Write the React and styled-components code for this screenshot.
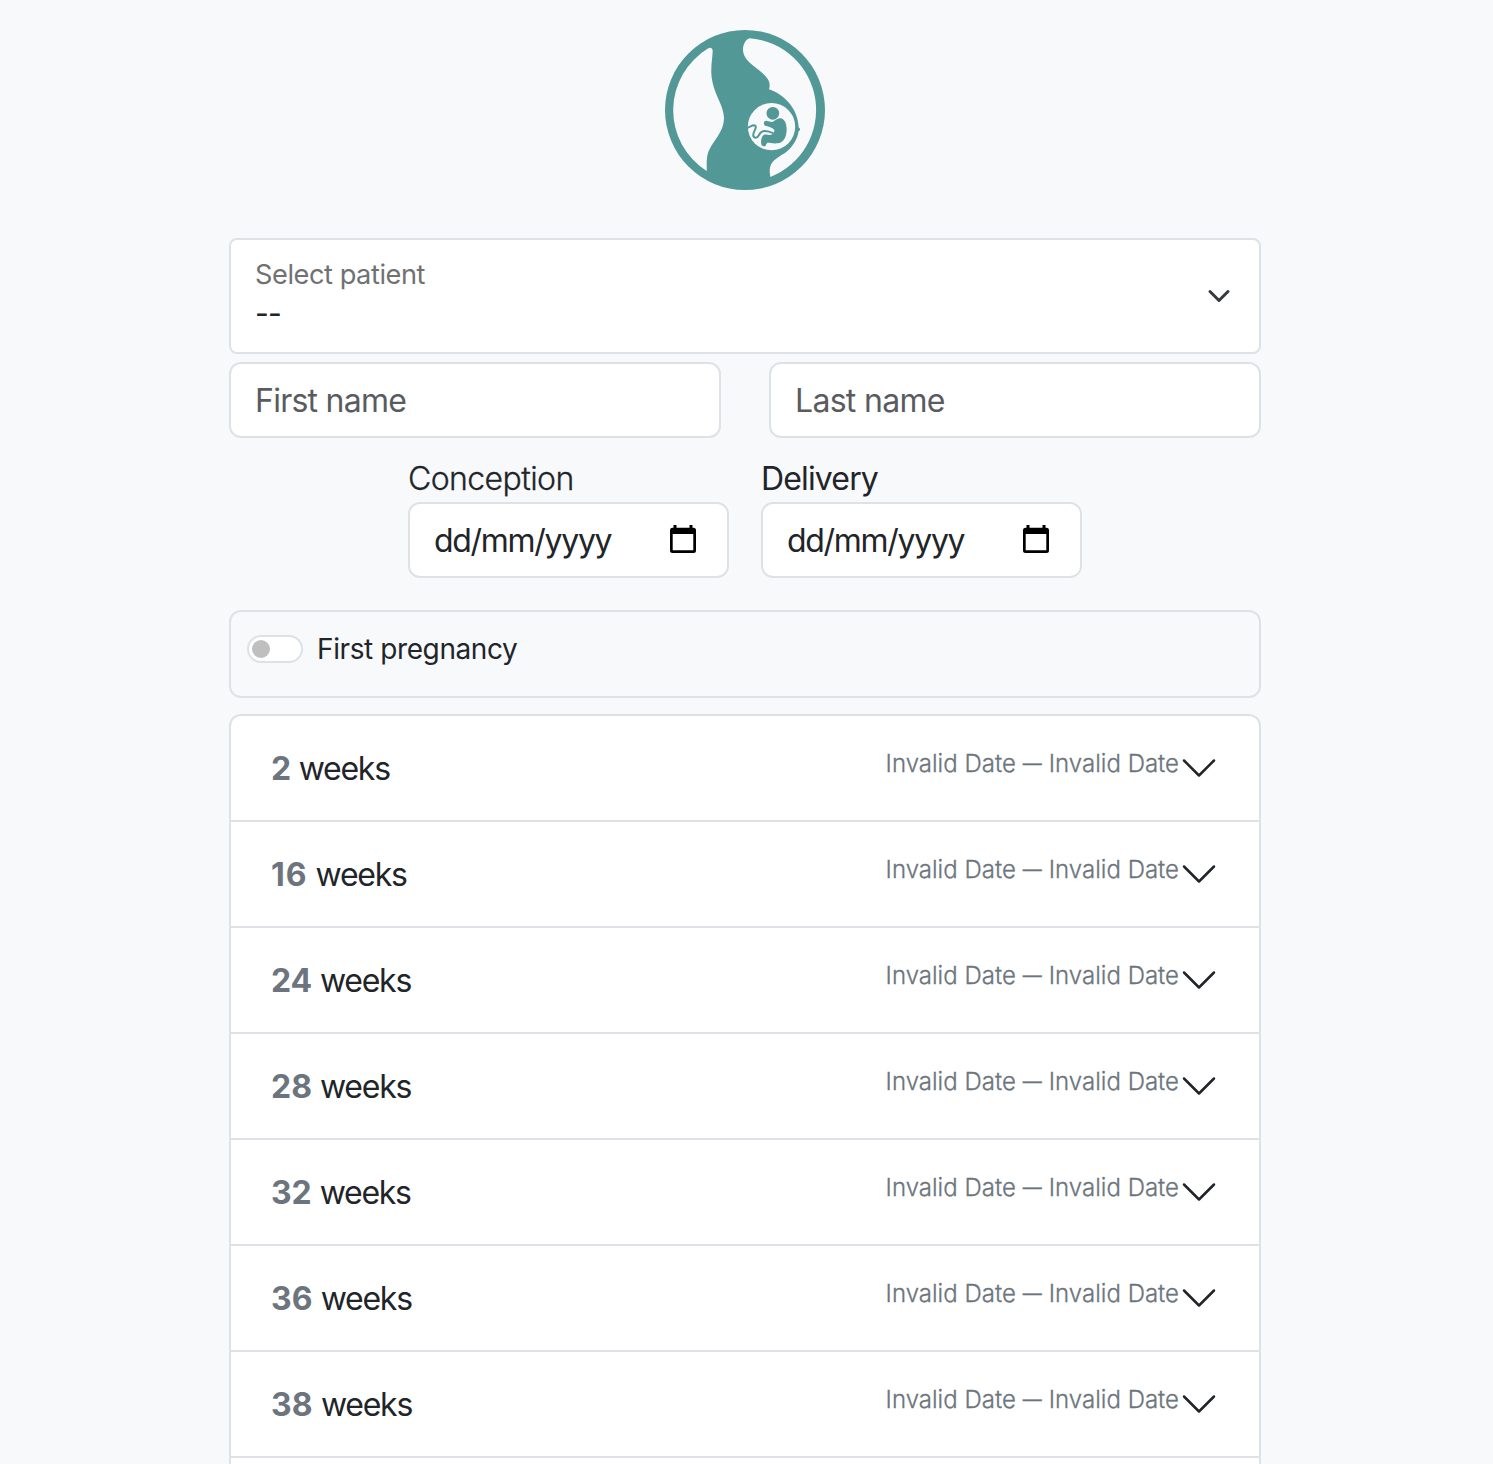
import React from "react";
import styled, { createGlobalStyle } from "styled-components";

const GlobalStyle = createGlobalStyle`
  *, *::before, *::after { box-sizing: border-box; }
  html, body { margin: 0; background: #f8f9fb; }
  body {
    color: #212529;
    font-family: Inter, "Liberation Sans", sans-serif;
    font-size: 32px;
    line-height: 48px;
    -webkit-font-smoothing: antialiased;
  }
`;

const Page = styled.main`
  width: 1032px;
  height: 1464px;
  margin-left: 229px;
  padding-top: 30px;
  display: flex;
  flex-direction: column;
`;

const Logo = styled.svg`
  display: block;
  flex: none;
  width: 160px;
  height: 160px;
  margin: 0 auto 48px;
`;

const Text = styled.span`
  display: block;
  white-space: nowrap;
  font-size: ${(p) => p.$size || 32}px;
  font-weight: ${(p) => p.$weight || 400};
  letter-spacing: ${(p) => p.$spacing || 0}px;
  color: ${(p) => p.$color || "inherit"};
  -webkit-text-stroke: ${(p) => (p.$weight === 300 ? 0.3 : 0)}px;
`;

const Box = styled.div`
  display: flex;
  flex: none;
  align-items: center;
  justify-content: space-between;
  height: 76px;
  padding: 2px 24px 0;
  background: #fff;
  border: 2px solid #dee2e6;
  border-radius: 12px;
`;

const SelectBox = styled(Box)`
  height: 116px;
  padding-top: 0;
  border-radius: 8px;
`;

const SelectText = styled.div`
  display: flex;
  flex-direction: column;
  line-height: 39px;
  padding-bottom: 4px;
`;

const NameRow = styled.div`
  display: grid;
  grid-template-columns: 1fr 1fr;
  gap: 48px;
  margin-top: 8px;
`;

const DateRow = styled.div`
  display: flex;
  justify-content: center;
  gap: 32px;
  margin-top: 17px;
`;

const DateField = styled.label`
  width: 321px;
`;

const DateBox = styled(Box)`
  margin-top: -1px;
  padding-right: 31px;
`;

const SwitchPanel = styled.div`
  display: flex;
  flex: none;
  gap: 14px;
  height: 88px;
  margin-top: 32px;
  padding: 13px 16px;
  border: 2px solid #dee2e6;
  border-radius: 12px;
`;

const Track = styled.span`
  display: flex;
  align-items: center;
  width: 56px;
  height: 28px;
  margin-top: 10px;
  padding-left: 3px;
  background: #fff;
  border: 2px solid #dee2e6;
  border-radius: 14px;

  &::before {
    content: "";
    width: 18px;
    height: 18px;
    border-radius: 50%;
    background: #bfbfbf;
  }
`;

const Accordion = styled.div`
  flex: 1;
  margin-top: 16px;
  background: #fff;
  border: 2px solid #dee2e6;
  border-bottom: 0;
  border-radius: 12px 12px 0 0;
`;

const Row = styled.div`
  display: flex;
  align-items: center;
  justify-content: space-between;
  height: 106px;
  padding: 0 40px;
  border-bottom: 2px solid #dee2e6;
`;

const Weeks = styled.div`
  display: flex;
  gap: 8px;
  padding-top: 2px;
`;

const WeekNumber = styled(Text)`
  font-weight: 700;
  color: #6c757d;
`;

const Range = styled.div`
  display: flex;
  align-items: center;
`;

const RangeText = styled(Text)`
  display: flex;
  gap: 7px;
  margin-bottom: 9px;
`;

const Dash = styled.span`
  font-size: 19px;
  font-weight: 400;
`;

const Icon = styled.svg`
  display: block;
  flex: none;
`;

const CalendarIcon = styled(Icon)`
  margin-bottom: 4px;
`;

function PregnancyLogo() {
  return (
    <Logo viewBox="30 30 480 480" aria-label="Pregnancy">
      <circle cx="270" cy="270" r="240" fill="#519896" />
      <g fill="#f8f9fb">
        <path d="M155 453A216 216 0 0 1 160 85C168 80 174 86 173 95C172 115 168 135 169 160C172 220 205 250 207 293C207 345 160 370 156 415C154 430 156 440 155 453Z" />
        <path d="M284 54.5A216 216 0 0 1 346 471L344 455C344 425 361 417 390 399C412 383 428 357 431 333L435 331V326L431 322C429 264 385 222 342 208C346 195 344 185 336 174C312 142 264 128 264 88C264 72 274 56 284 54.5Z" />
        <circle cx="349.500" cy="320" r="71" />
      </g>
      <g fill="#519896">
        <circle cx="353.500" cy="280" r="19" />
        <path d="M327 309C327 302 334 301 340 304L350 306C359 305 363 296 375 295C389 296 395 311 395 330C394 354 384 369 367 370C354 371 343 368 337 368L333 374C333 379 325 381 320 376C316 367 319 354 323 348C328 341 338 345 345 345C354 344 359 339 358 330C354 325 346 321 334 318C328 317 326 313 327 309Z" />
      </g>
      <path
        d="M278 323C286 321 290 316 297 316C312 318 291 338 295 348C299 357 308 353 312 345C319 329 335 330 356 340"
        fill="none"
        stroke="#519896"
        strokeWidth="6"
      />
    </Logo>
  );
}

function Chevron({ width, height, stroke, color }) {
  return (
    <Icon width={width} height={height} viewBox="0 0 16 16" fill="none">
      <path
        d="m2 5 6 6 6-6"
        stroke={color}
        strokeWidth={stroke}
        strokeLinecap="round"
        strokeLinejoin="round"
      />
    </Icon>
  );
}

function Calendar() {
  return (
    <CalendarIcon width="26" height="28" viewBox="0 0 26 28">
      <path
        fillRule="evenodd"
        d="M3.500 0H6.500V2.700H19.500V0H22.500V2.700H23.500Q26 2.700 26 5.200V25.500Q26 28 23.500 28H2.500Q0 28 0 25.500V5.200Q0 2.700 2.500 2.700H3.500ZM2.700 9V25.300H23.300V9Z"
      />
    </CalendarIcon>
  );
}

function DateInput({ label, weight, spacing }) {
  return (
    <DateField>
      <Text $weight={weight} $spacing={spacing}>{label}</Text>
      <DateBox>
        <Text $spacing={-1.3}>dd/mm/yyyy</Text>
        <Calendar />
      </DateBox>
    </DateField>
  );
}

const weeks = [
  { n: 2, spacing: -0.5 },
  { n: 16, spacing: 1 },
  { n: 24, spacing: -0.2 },
  { n: 28, spacing: 0 },
  { n: 32, spacing: -0.1 },
  { n: 36, spacing: 0.1 },
  { n: 38, spacing: 0.2 },
];

export default function App() {
  return (
    <>
      <GlobalStyle />
      <Page>
        <PregnancyLogo />
        <SelectBox>
          <SelectText>
            <Text $size={27.2} $spacing={-0.45} $color="#6f7173">Select patient</Text>
            <Text $size={30} $spacing={-0.9}>--</Text>
          </SelectText>
          <Chevron width={32} height={24} stroke={2} color="#343a40" />
        </SelectBox>
        <NameRow>
          <Box><Text $spacing={-0.75} $color="#595c5f">First name</Text></Box>
          <Box><Text $spacing={-0.7} $color="#595c5f">Last name</Text></Box>
        </NameRow>
        <DateRow>
          <DateInput label="Conception" weight={300} spacing={-0.6} />
          <DateInput label="Delivery" weight={400} spacing={-0.85} />
        </DateRow>
        <SwitchPanel>
          <Track />
          <Text $size={28} $spacing={-0.4}>First pregnancy</Text>
        </SwitchPanel>
        <Accordion>
          {weeks.map(({ n, spacing }) => (
            <Row key={n}>
              <Weeks>
                <WeekNumber $spacing={spacing}>{n}</WeekNumber>
                <Text $spacing={-1.25}>weeks</Text>
              </Weeks>
              <Range>
                <RangeText $size={24} $weight={300} $spacing={0.01} $color="#6c757d">
                  <span>Invalid Date</span>
                  <Dash>—</Dash>
                  <span>Invalid Date</span>
                </RangeText>
                <Chevron width={40} height={40} stroke={1} color="#212529" />
              </Range>
            </Row>
          ))}
        </Accordion>
      </Page>
    </>
  );
}
